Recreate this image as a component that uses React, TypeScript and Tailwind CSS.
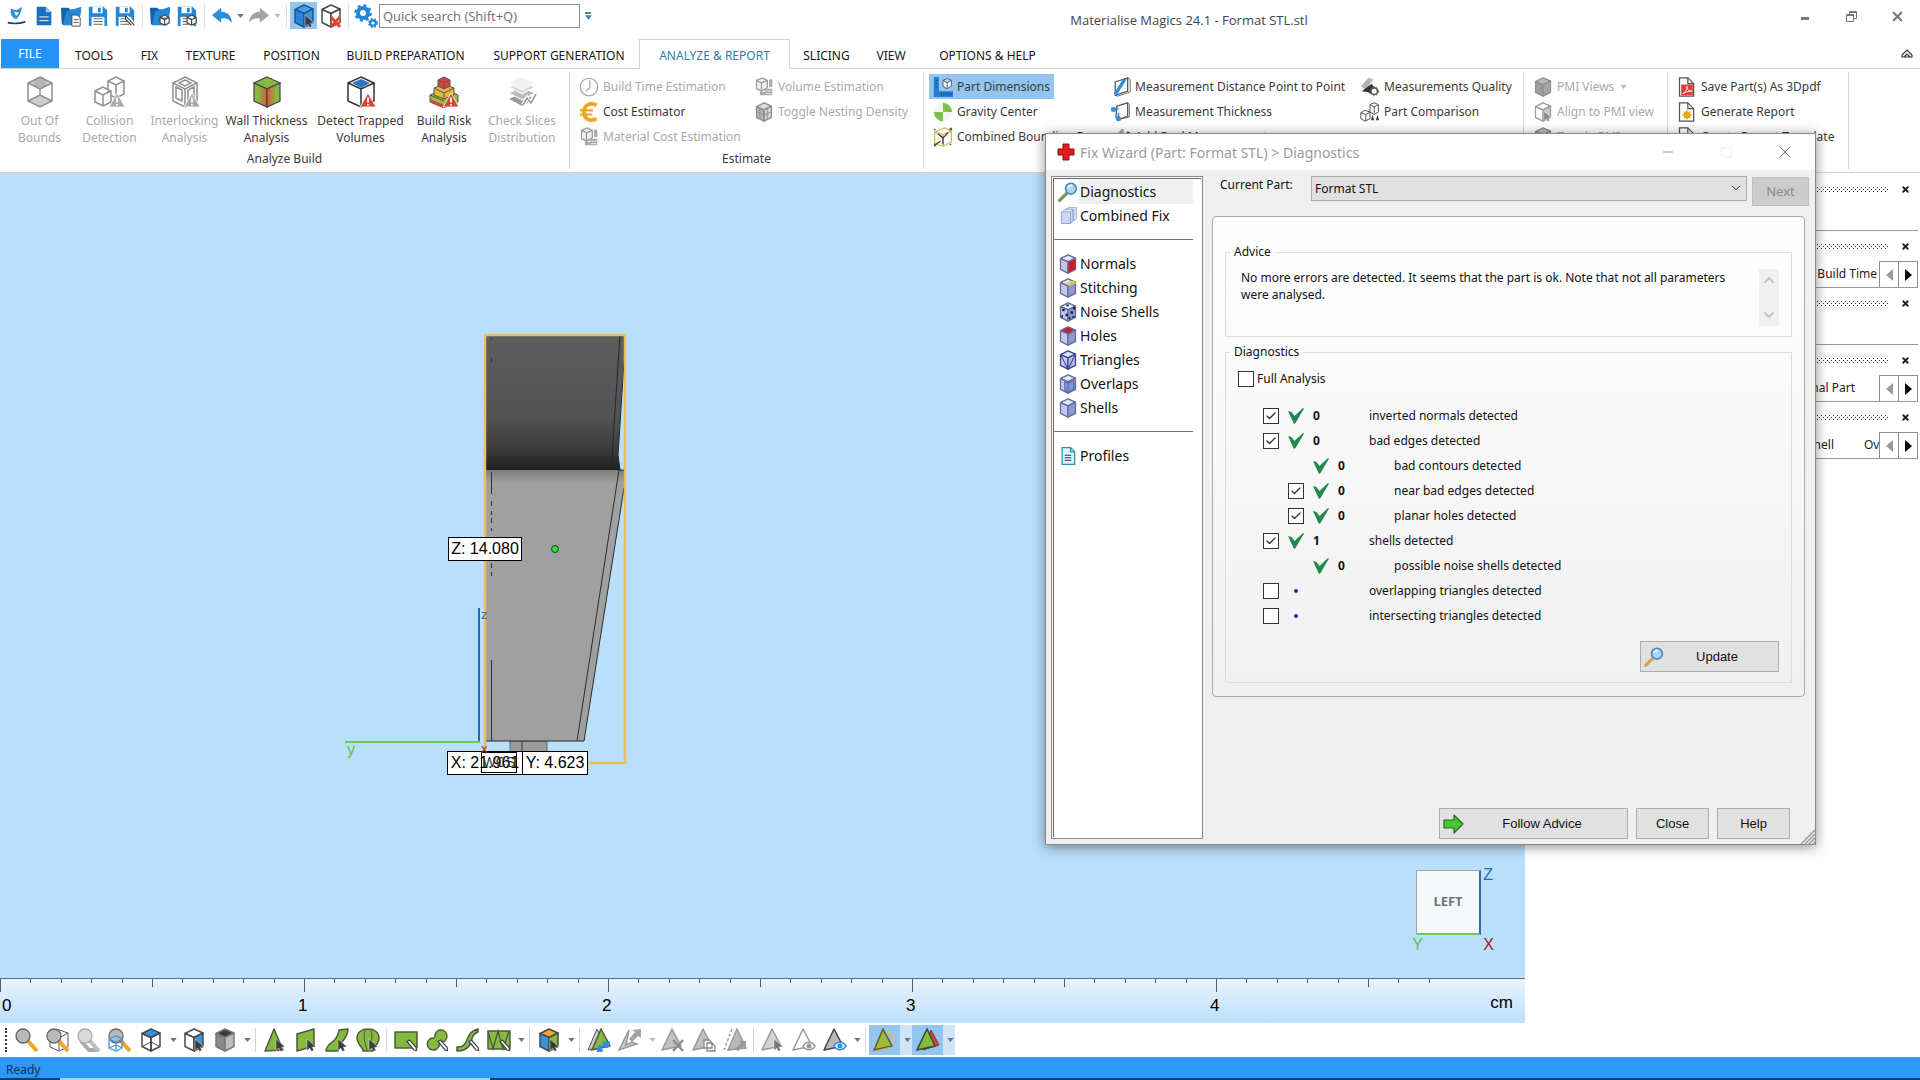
import React, { useState } from "react";
import { Check, ChevronDown, ChevronUp, Minus, Square, X } from "lucide-react";

type CubeProps = {
  top?: string;
  left?: string;
  right?: string;
  stroke?: string;
  children?: React.ReactNode;
  className?: string;
};

const Cube = ({
  top = "#fff",
  left = "#fff",
  right = "#fff",
  stroke = "#4a4a4a",
  children,
  className = "w-[24px] h-[24px]",
}: CubeProps) => (
  <svg viewBox="0 0 24 24" className={className}>
    <g stroke={stroke} strokeWidth="1.5" strokeLinejoin="round">
      <path d="M12 1 21 5 12 9.5 3 5.5Z" fill={top} />
      <path d="M3 5.5 12 9.5V23L3 18.5Z" fill={left} />
      <path d="M21 5 12 9.5V23L21 18.5Z" fill={right} />
    </g>
    {children}
  </svg>
);

const Cursor = ({ fill = "#3c3c3c" }) => (
  <path d="M13 11v11.500l2.800-2.300 1.700 3.300 2.400-1.200-1.700-3.100 3.800-.400Z" fill={fill} stroke="#fff" strokeWidth=".4" />
);

const Warning = ({ fill = "#d9453d" }) => (
  <g>
    <path d="M23 17 31 31H15Z" fill={fill} stroke="#fff" strokeWidth=".8" />
    <path d="M23 21.500v5M23 28v1.500" stroke="#fff" strokeWidth="1.800" />
  </g>
);

const Svg = ({
  children,
  className = "w-[24px] h-[24px]",
}: {
  children: React.ReactNode;
  className?: string;
}) => (
  <svg viewBox="0 0 24 24" className={className} fill="none">
    {children}
  </svg>
);

const Caret = ({ faded = false, wide = false }) => (
  <span
    className={
      wide
        ? "w-3 h-7 pl-[2px] flex items-center justify-center"
        : "w-[10px] flex items-center justify-center"
    }
  >
    <svg viewBox="0 0 8 5" className="w-[7px] h-[4px]">
      <path d="M0 0H8L4 5Z" fill={faded ? "#b9b9b9" : "#6b7680"} />
    </svg>
  </span>
);

/* ---------- quick access bar ---------- */

const Floppy = ({ children }: { children?: React.ReactNode }) => (
  <Svg className="w-[22px] h-[22px]">
    <path d="M2 2h16l4 4v17H2Z" fill="#2387d8" />
    <path d="M6 2h11v7H6Z" fill="#fff" />
    <path d="M12 3h3v5h-3Z" fill="#2387d8" />
    <path d="M5 13h14v10H5Z" fill="#fff" />
    <path d="M7 15h10M7 18h10M7 21h10" stroke="#555" strokeWidth="1" />
    {children}
  </Svg>
);

const Folder = ({ children }: { children?: React.ReactNode }) => (
  <Svg className="w-[22px] h-[22px]">
    <path d="M1 3h8l2 2h9v5L6 22 2 21Z" fill="#1463a8" />
    <path d="M7 7 23 2v5l-3 15H3Z" fill="#2387d8" />
    {children}
  </Svg>
);

const smallCube = (
  <path
    d="M17 11l5 2.500v6L17 22l-5-2.500v-6ZM12 13.500l5 2.500 5-2.500M17 16v6"
    fill="#fff"
    stroke="#444"
    strokeWidth="1.300"
  />
);

const Gear = () => (
  <Svg>
    <circle cx="9" cy="9" r="5" stroke="#2387d8" strokeWidth="4" />
    <circle cx="9" cy="9" r="7.600" stroke="#2387d8" strokeWidth="2.400" strokeDasharray="3 3" />
    <circle cx="19" cy="19" r="2.700" stroke="#2387d8" strokeWidth="2.300" />
    <circle cx="19" cy="19" r="4.200" stroke="#2387d8" strokeWidth="1.600" strokeDasharray="1.700 1.700" />
  </Svg>
);

const QuickSlot = ({
  label,
  active,
  children,
}: {
  label: string;
  active?: boolean;
  children: React.ReactNode;
}) => (
  <button
    aria-label={label}
    className={`w-[27px] h-[27px] flex items-center justify-center ${active ? "bg-[#93c5f0]" : ""}`}
  >
    {children}
  </button>
);

const QuickSep = () => (
  <span className="w-2 flex justify-center">
    <span className="w-px h-6 bg-[#dcdcdc]" />
  </span>
);

const TitleBar = () => (
  <header className="flex items-start h-[39px] pt-[2px] font-['Open_Sans','Noto_Sans',sans-serif]">
    <div className="flex items-center pl-[3px]">
      <QuickSlot label="Magics">
        <Svg className="w-[20px] h-[20px]">
          <path d="M5 3c5 3 8 2 13-2-1 7-3 11-7 15C6 14 3 9 5 3Z" fill="#2a95cf" />
          <path d="M9 6c2 2 4 2 5 1 0 2-1 3-3 5-1-2-2-3-2-6Z" fill="#fff" />
          <path d="M1 20c8 2 14 1 21-1" stroke="#14405e" strokeWidth="2" />
        </Svg>
      </QuickSlot>
      <QuickSlot label="New">
        <Svg className="w-[22px] h-[22px]">
          <path d="M4 2h10l6 6v14H4Z" fill="#1b6ec0" />
          <path d="M14 2v6h6Z" fill="#9cc8ee" />
          <path d="M7 13h10M7 17h10" stroke="#fff" strokeWidth="1" />
        </Svg>
      </QuickSlot>
      <QuickSlot label="Open">
        <Folder>
          <path d="M13 11h6l3 3v9h-9Z" fill="#fff" stroke="#444" />
          <path d="M15 16h5M15 19h5" stroke="#444" />
        </Folder>
      </QuickSlot>
      <QuickSlot label="Save">
        <Floppy />
      </QuickSlot>
      <QuickSlot label="Save as">
        <Floppy>
          <path d="M13 13 22 22" stroke="#fff" strokeWidth="5" />
          <path d="M13 12 22 22M12 15l7 7M13 12l-1 3" stroke="#444" strokeWidth="1.200" />
        </Floppy>
      </QuickSlot>
      <QuickSep />
      <QuickSlot label="Import part">
        <Folder>{smallCube}</Folder>
      </QuickSlot>
      <QuickSlot label="Save part">
        <Floppy>{smallCube}</Floppy>
      </QuickSlot>
      <QuickSep />
      <QuickSlot label="Undo">
        <Svg className="w-[20px] h-[20px]">
          <path d="M0 11 11 2v5c7 0 12 4 13 13-4-5-8-6-13-5v5Z" fill="#2a8fdd" />
        </Svg>
      </QuickSlot>
      <Caret />
      <QuickSlot label="Redo">
        <Svg className="w-[20px] h-[20px]">
          <path d="M24 11 13 2v5C6 7 1 11 0 20c4-5 8-6 13-5v5Z" fill="#a3a3a3" />
        </Svg>
      </QuickSlot>
      <Caret faded />
      <QuickSep />
      <QuickSlot label="Select part" active>
        <Cube top="#4aa0e6" left="#2b86d3" right="#3a94dd" stroke="#1b5a96">
          <Cursor />
        </Cube>
      </QuickSlot>
      <QuickSlot label="Unload part">
        <Cube>
          <path d="M12 13 21 23M21 13 12 23" stroke="#e2443c" strokeWidth="3" />
        </Cube>
      </QuickSlot>
      <QuickSep />
      <QuickSlot label="Settings">
        <Gear />
      </QuickSlot>
      <input
        type="text"
        aria-label="Quick search"
        placeholder="Quick search (Shift+Q)"
        className="w-[201px] h-6 border border-[#8c8c8c] px-[3px] text-[13px] placeholder:text-[#6d6d6d] outline-none"
      />
      <span className="w-4 flex flex-col items-center gap-px">
        <span className="w-[6px] h-[2px] bg-[#4c84b0]" />
        <svg viewBox="0 0 8 5" className="w-[7px] h-[5px]">
          <path d="M0 0H8L4 5Z" fill="#4c84b0" />
        </svg>
      </span>
    </div>
    <h1 className="flex-1 text-center text-[13px] leading-9 text-[#444]">
      Materialise Magics 24.1 - Format STL.stl
    </h1>
    <div className="flex text-[#777]">
      <button aria-label="Minimize" className="w-[46px] h-7 flex items-center justify-center">
        <span className="w-2 h-[3px] mt-1 bg-[#7c7c7c]" />
      </button>
      <button aria-label="Restore" className="w-[46px] h-7 flex items-center justify-center">
        <svg viewBox="0 0 11 11" className="w-[11px] h-[11px]" fill="none" stroke="#777">
          <path d="M3.500 3V.5h7v7H8M3 1.500h8" />
          <path d="M.5 3.500h7v7h-7ZM0 4.500h8" />
        </svg>
      </button>
      <button aria-label="Close" className="w-[46px] h-7 flex items-center justify-center">
        <X size={15} strokeWidth={3.4} />
      </button>
    </div>
  </header>
);

/* ---------- tabs ---------- */

const tabs = [
  { name: "TOOLS", width: "w-[70px]" },
  { name: "FIX", width: "w-[41px]" },
  { name: "TEXTURE", width: "w-[81px]" },
  { name: "POSITION", width: "w-[81px]" },
  { name: "BUILD PREPARATION", width: "w-[147px]" },
  { name: "SUPPORT GENERATION", width: "w-[160px]" },
  { name: "ANALYZE & REPORT", width: "w-[151px]", active: true },
  { name: "SLICING", width: "w-[73px]" },
  { name: "VIEW", width: "w-[56px]" },
  { name: "OPTIONS & HELP", width: "w-[137px]" },
];

const TabBar = () => (
  <nav className="flex h-[30px] pl-px text-[12px] border-b border-[#cfd4d8]">
    <button className="w-[58px] h-[29px] bg-[#2494fa] text-white">FILE</button>
    {tabs.map((tab) => (
      <button
        key={tab.name}
        className={`${tab.width} whitespace-nowrap h-[30px] pt-[3px] ${
          tab.active
            ? "border border-b-white border-[#cfd4d8] bg-white text-[#2b7fae]"
            : "text-[#151515]"
        }`}
      >
        {tab.name}
      </button>
    ))}
    <button aria-label="Collapse ribbon" className="ml-auto mr-[7px]">
      <svg viewBox="0 0 12 10" className="w-3 h-[10px]" fill="none" stroke="#333" strokeWidth="1.200">
        <path d="M1 6 6 1l5 5M3 8l3-3 3 3M1 6v2h10V6" />
      </svg>
    </button>
  </nav>
);

/* ---------- ribbon ---------- */

const Big = ({
  lines,
  width,
  disabled,
  children,
}: {
  lines: [string, string];
  width: string;
  disabled?: boolean;
  children: React.ReactNode;
}) => (
  <button
    disabled={disabled}
    className={`${width} flex flex-col items-center leading-[17px] whitespace-nowrap ${
      disabled ? "text-[#a9a9a9]" : "text-[#3a3a3a]"
    }`}
  >
    <svg viewBox="0 0 32 32" className="w-8 h-8 mb-1" fill="none">
      {children}
    </svg>
    <span>{lines[0]}</span>
    <span>{lines[1]}</span>
  </button>
);

const Small = ({
  label,
  icon,
  disabled,
  active,
  caret,
}: {
  label: string;
  icon: React.ReactNode;
  disabled?: boolean;
  active?: boolean;
  caret?: boolean;
}) => (
  <button
    disabled={disabled}
    className={`h-[25px] flex items-center gap-1 px-1 whitespace-nowrap ${
      disabled ? "text-[#a9a9a9]" : "text-[#3a3a3a]"
    } ${active ? "bg-[#93c5f0]" : ""}`}
  >
    {icon}
    {label}
    {caret && <Caret faded />}
  </button>
);

const Column = ({ width, children }: { width: string; children: React.ReactNode }) => (
  <div className={`${width} flex flex-col items-start`}>{children}</div>
);

const Group = ({
  width,
  label,
  children,
}: {
  width: string;
  label?: string;
  children: React.ReactNode;
}) => (
  <section className={`${width} my-[3px] flex flex-col border-r border-[#d5d5d5]`}>
    <div className="flex-1 flex">{children}</div>
    <h2 className="h-[18px] text-center leading-4 text-[#3a3a3a]">{label}</h2>
  </section>
);

const sm = "w-5 h-5 shrink-0";

const BoxStack = () => (
  <Svg className={sm}>
    <path d="M3 4 10 1l6 3v9l-7 4-6-3Z" fill="#eee" stroke="#999" strokeWidth="1.500" />
    <path d="M3 4l6 3 7-3M9 7v9" stroke="#999" strokeWidth="1.500" />
    <path d="M13 14h9v8H7v-4h6ZM18 3h4v9h-4" fill="#aaa" />
    <path d="M14 17h7M14 20h7" stroke="#eee" />
  </Svg>
);

const Page = ({ children }: { children?: React.ReactNode }) => (
  <Svg className={sm}>
    <path d="M3 1h10l7 7v15H3Z" fill="#fff" stroke="#555" strokeWidth="1.500" />
    <path d="M13 1v7h7" stroke="#555" strokeWidth="1.500" />
    {children}
  </Svg>
);

const Ribbon = () => (
  <div className="flex h-[104px] text-[12px] border-b border-[#cfd4d8]">
    <Group width="w-[570px]" label="Analyze Build">
      <div className="flex pl-[5px] pt-1">
        <Big lines={["Out Of", "Bounds"]} width="w-[69px]" disabled>
          <path d="M4 7 16 1l12 6-12 6ZM4 25l12-6 12 6-12 6Z" fill="#ccc" />
          <circle cx="16" cy="7" r="6" fill="#b5b5b5" />
          <path d="M16 1 28 7v18l-12 6L4 25V7ZM4 7l12 6 12-6M16 13v6M4 25l12-6 12 6" stroke="#8f8f8f" strokeWidth="1.500" />
        </Big>
        <Big lines={["Collision", "Detection"]} width="w-[71px]" disabled>
          <path d="M14 5 22 1l8 4v13l-8 4-8-4ZM14 5l8 4 8-4M22 9v12" fill="#fff" stroke="#8f8f8f" strokeWidth="1.500" />
          <path d="M1 15 9 11l8 4v11l-8 4-8-4ZM1 15l8 4 8-4M9 19v11" fill="#fff" stroke="#8f8f8f" strokeWidth="1.500" />
          <Warning fill="#a9a9a9" />
        </Big>
        <Big lines={["Interlocking", "Analysis"]} width="w-[79px]" disabled>
          <path d="M16 1 28 7v18l-12 6L4 25V7ZM4 7l12 6 12-6M16 13v18" stroke="#8f8f8f" strokeWidth="1.500" />
          <path d="M16 4 22 7l-6 3-6-3ZM7 11l6 3v11l-6-3ZM25 11l-6 3v11l6-3Z" stroke="#8f8f8f" strokeWidth="1.500" />
          <Warning fill="#a9a9a9" />
        </Big>
        <Big lines={["Wall Thickness", "Analysis"]} width="w-[85px]">
          <defs>
            <linearGradient id="wallL" x1="0" x2="1">
              <stop offset=".3" stopColor="#86b93f" />
              <stop offset="1" stopColor="#e2533c" />
            </linearGradient>
            <linearGradient id="wallR" x1="0" x2="1">
              <stop offset="0" stopColor="#e2533c" />
              <stop offset=".7" stopColor="#86b93f" />
            </linearGradient>
          </defs>
          <path d="M16 1 29 7l-13 6L3 7Z" fill="#86b93f" stroke="#444" strokeWidth="1.200" />
          <path d="M3 7l13 6v18L3 25Z" fill="url(#wallL)" stroke="#444" strokeWidth="1.200" />
          <path d="M29 7l-13 6v18l13-6Z" fill="url(#wallR)" stroke="#444" strokeWidth="1.200" />
        </Big>
        <Big lines={["Detect Trapped", "Volumes"]} width="w-[103px]">
          <path d="M16 1 29 7v18l-13 6L3 25V7Z" fill="#fff" stroke="#333" strokeWidth="1.500" />
          <path d="M7 7l9-4 9 4-9 5Z" fill="#2a77bd" />
          <path d="M3 7l13 6 13-6M16 13v18" stroke="#333" strokeWidth="1.500" />
          <Warning />
        </Big>
        <Big lines={["Build Risk", "Analysis"]} width="w-[64px]">
          <path d="M2 19 16 13l14 6v7l-14 6-14-6Z" fill="#9dbb3e" stroke="#555" />
          <path d="M2 23l14 6v3L2 26Z" fill="#d9453d" />
          <path d="M6 12 16 8l10 4v7l-10 4-10-4Z" fill="#e2b83b" stroke="#555" />
          <path d="M10 4l6-3 6 3v6l-6 3-6-3Z" fill="#d9453d" stroke="#555" />
          <path d="M10 4l6 3 6-3M16 7v6M6 12l10 5 10-5M16 17v6M2 19l14 6" stroke="#555" />
          <Warning />
        </Big>
        <Big lines={["Check Slices", "Distribution"]} width="w-[92px]" disabled>
          <path d="M3 23l13-6 13 6-13 7Z" fill="#9b9b9b" />
          <path d="M3 17l13-6 13 6-13 7Z" fill="#bcbcbc" stroke="#fff" />
          <path d="M3 11l13-6 13 6-13 7Z" fill="#d7d7d7" stroke="#fff" />
          <path d="M3 7l13-6 13 6-13 7Z" fill="#efefef" stroke="#fff" />
          <path d="M17 29l4-7 4 5 5-9" stroke="#fff" strokeWidth="4" />
          <path d="M17 29l4-7 4 5 5-9" stroke="#8f8f8f" strokeWidth="1.500" />
        </Big>
      </div>
    </Group>
    <Group width="w-[354px]" label="Estimate">
      <div className="flex pl-[5px] pt-[2px]">
        <Column width="w-[175px]">
          <Small
            label="Build Time Estimation"
            disabled
            icon={
              <Svg className={sm}>
                <circle cx="12" cy="12" r="10.500" stroke="#a9a9a9" strokeWidth="1.500" />
                <path d="M13 4v9l-5 4" stroke="#a9a9a9" strokeWidth="1.500" />
              </Svg>
            }
          />
          <Small
            label="Cost Estimator"
            icon={
              <Svg className={sm}>
                <path d="M21 4C14 0 6 3 6 12s8 12 15 8" stroke="#f0a51e" strokeWidth="4.500" />
                <path d="M1 10h16M1 15h15" stroke="#f0a51e" strokeWidth="2.500" />
              </Svg>
            }
          />
          <Small label="Material Cost Estimation" disabled icon={<BoxStack />} />
        </Column>
        <Column width="w-[170px]">
          <Small label="Volume Estimation" disabled icon={<BoxStack />} />
          <Small
            label="Toggle Nesting Density"
            disabled
            icon={
              <Cube top="#ddd" left="#b5b5b5" right="#cfcfcf" stroke="#8d8d8d" className={sm}>
                <path d="M12 10v12M7 8v12M16 8v12M4 12l8 4 8-4" stroke="#8d8d8d" fill="none" />
              </Cube>
            }
          />
        </Column>
      </div>
    </Group>
    <Group width="w-[600px]">
      <div className="flex pl-[5px] pt-[2px]">
        <Column width="w-[178px]">
          <Small
            label="Part Dimensions"
            active
            icon={
              <Svg className={sm}>
                <path d="M1 0h6v17h17v7H1Z" fill="#1f7fd0" />
                <path d="M10 19v3M13 19v3M16 19v3M19 19v3M22 19v3M3 4h3M3 8h3M3 12h3" stroke="#144e82" />
                <path d="M17 2l5 2v7l-5 3-5-3V4ZM12 4l5 3 5-3M17 7v6" fill="#fff" stroke="#444" />
              </Svg>
            }
          />
          <Small
            label="Gravity Center"
            icon={
              <Svg className={sm}>
                <path d="M12 12V1A11 11 0 0 0 1 12ZM12 12v11A11 11 0 0 0 23 12Z" fill="#f3f3f3" />
                <path d="M12 12V1A11 11 0 0 1 23 12ZM12 12v11A11 11 0 0 1 1 12Z" fill="#7cc04b" />
              </Svg>
            }
          />
          <Small
            label="Combined Bounding Box"
            icon={
              <Svg className={sm}>
                <path d="M2 6 14 1l8 4v13l-10 5-10-3ZM2 6l10 3 10-4M12 9v13" stroke="#d8a93a" strokeWidth="1.300" />
                <path d="M6 8l6 5 6-6M12 13v8M3 21l6-4" stroke="#333" strokeWidth="1.500" />
                <path d="M1 2h2v2H1ZM20 1h3v3h-3ZM1 20h3v3H1ZM20 20h2v2h-2Z" fill="#555" />
              </Svg>
            }
          />
        </Column>
        <Column width="w-[249px]">
          <Small
            label="Measurement Distance Point to Point"
            icon={
              <Svg className={sm}>
                <path d="M5 6 20 1v16L5 22Z" fill="#fff" stroke="#555" strokeWidth="1.500" />
                <path d="M20 1l3 2v15l-15 5-3-1" stroke="#555" />
                <path d="M17 2 5 21" stroke="#2f8fdf" strokeWidth="4" />
              </Svg>
            }
          />
          <Small
            label="Measurement Thickness"
            icon={
              <Svg className={sm}>
                <path d="M7 5 20 1v16L9 21l-3-3Z" fill="#fff" stroke="#555" strokeWidth="1.500" />
                <path d="M20 1l2 2v15L9 21" stroke="#555" />
                <path d="M0 8h9M9 21v-8" stroke="#2f8fdf" strokeWidth="2" />
                <circle cx="3" cy="9" r="3" fill="#2f8fdf" />
                <circle cx="9" cy="20" r="3" fill="#2f8fdf" />
              </Svg>
            }
          />
          <Small
            label="Add Real Measurement"
            icon={
              <Svg className={sm}>
                <path d="M1 15 13 2l3 1-3 9-9 7Z" fill="#aaa" />
                <path d="M10 18 20 5l3 2-8 14Z" fill="#444" />
              </Svg>
            }
          />
        </Column>
        <Column width="w-[164px]">
          <Small
            label="Measurements Quality"
            icon={
              <Svg className={sm}>
                <path d="M1 11 10 1l6 2-9 12Z" fill="#b5b5b5" />
                <path d="M2 17 14 8l4 6-5 6-4-2Z" fill="#333" />
                <circle cx="17" cy="17" r="4" fill="#fff" stroke="#555" strokeWidth="2" />
                <circle cx="17" cy="17" r="5.500" stroke="#555" strokeDasharray="2 2" />
              </Svg>
            }
          />
          <Small
            label="Part Comparison"
            icon={
              <Svg className={sm}>
                <path d="M12 3 17 1l5 2v9l-5 3-5-3ZM12 3l5 3 5-3M17 6v8" fill="#fff" stroke="#555" strokeWidth="1.200" />
                <path d="M1 13l5-3 6 2v8l-6 3-5-3ZM1 13l6 2 5-3M7 15v8" fill="#fff" stroke="#555" strokeWidth="1.200" />
                <path d="M15 15l-2 7h4ZM21 15l-2 7h4Z" fill="#444" />
              </Svg>
            }
          />
        </Column>
      </div>
    </Group>
    <Group width="w-[144px]">
      <div className="flex pl-[5px] pt-[2px]">
        <Column width="w-[130px]">
          <Small
            label="PMI Views"
            disabled
            caret
            icon={<Cube top="#b9b9b9" left="#9d9d9d" right="#a7a7a7" stroke="#8f8f8f" className={sm} />}
          />
          <Small
            label="Align to PMI view"
            disabled
            icon={
              <Cube stroke="#9a9a9a" right="#c9c9c9" className={sm}>
                <Cursor fill="#888" />
              </Cube>
            }
          />
          <Small
            label="Toggle PMI"
            disabled
            icon={<Cube top="#b9b9b9" left="#9d9d9d" right="#a7a7a7" stroke="#8f8f8f" className={sm} />}
          />
        </Column>
      </div>
    </Group>
    <Group width="w-[181px]">
      <div className="flex pl-[5px] pt-[2px]">
        <Column width="w-[170px]">
          <Small
            label="Save Part(s) As 3Dpdf"
            icon={
              <Page>
                <path d="M5 9h14v13H5Z" fill="#dd4038" />
                <path d="M7 20c4-2 5-5 5-9 0 5 2 6 6 6-5 0-8 1-11 3Z" stroke="#fff" />
              </Page>
            }
          />
          <Small
            label="Generate Report"
            icon={
              <Page>
                <path d="M12 9l1.500 3 3-1-1 3 3 1.500-3 1.500 1 3-3-1L12 22l-1.500-3-3 1 1-3-3-1.500 3-1.500-1-3 3 1Z" fill="#f0a51e" />
              </Page>
            }
          />
          <Small label="Create Report Template" icon={<Page />} />
        </Column>
      </div>
    </Group>
  </div>
);

/* ---------- viewport ---------- */

const Model = () => (
  <svg
    viewBox="340 320 300 450"
    className="absolute left-[340px] top-[147px] w-[300px] h-[450px]"
    fill="none"
  >
    <defs>
      <linearGradient id="upper" x1="0" y1="0" x2="0" y2="1">
        <stop offset="0" stopColor="#5d5d5d" />
        <stop offset=".6" stopColor="#535353" />
        <stop offset=".85" stopColor="#3b3b3b" />
        <stop offset="1" stopColor="#1e1e1e" />
      </linearGradient>
      <linearGradient id="lower" x1="0" y1="0" x2="0" y2="1">
        <stop offset="0" stopColor="#7d7d7d" />
        <stop offset=".05" stopColor="#a0a0a0" />
        <stop offset="1" stopColor="#9f9f9f" />
      </linearGradient>
    </defs>
    <path d="M486 336H625L619 440 618 455 620 470H486Z" fill="url(#upper)" />
    <path d="M620 336 613 440 612 463M625 345 619 440 618 455 620 470" stroke="#25252d" />
    <path d="M510 741H547V755H510Z" fill="#9b9b9b" stroke="#4b6a86" />
    <path d="M522 741V753" stroke="#333" />
    <path d="M486 470H624V490L584 741H486Z" fill="url(#lower)" />
    <path d="M619 470 577 741M624 488 584 741M486 741H584M619 470H625" stroke="#2d2d2d" />
    <path
      d="M491.500 338v2M491.500 358v4M491.500 472v22M491.500 501v5M491.500 511v4M491.500 518v5M491.500 528v3M491.500 563v5M491.500 572v4M491.500 660V741"
      stroke="#333"
    />
    <path d="M485 750V335H625V763H585" stroke="#e3c060" strokeWidth="2.500" />
    <path d="M479 608V742" stroke="#2667c2" strokeWidth="2" />
    <path d="M345 742H480" stroke="#67cc58" strokeWidth="2" />
    <circle cx="555" cy="549" r="3.500" fill="#32dc39" stroke="#1d3f1d" />
  </svg>
);

const axis = "absolute font-['Liberation_Sans',sans-serif]";
const dimension =
  "absolute h-6 border border-black flex items-center justify-center text-[16px] text-black font-['Liberation_Sans',sans-serif]";

const ticks = Array.from({ length: 48 }, (_, i) => i);
const PX_PER_CM = 304;

const Ruler = () => (
  <div className="relative h-[45px] border-t border-[#56708a] bg-linear-to-b from-[#e9f4fd] to-[#bcdffb] overflow-hidden font-['Liberation_Sans',sans-serif] text-[17px] leading-5 text-black">
    <svg className="w-full h-4" stroke="#4d5f70">
      {ticks.map((i) => {
        const x = Math.round((i * PX_PER_CM) / 10) + 0.5;
        return <path key={i} d={`M${x} 0V${i % 10 === 0 ? 13 : i % 5 === 0 ? 8 : 4}`} />;
      })}
    </svg>
    {[0, 1, 2, 3, 4].map((n) => (
      <span
        key={n}
        className="absolute top-[17px]"
        style={{ left: n === 0 ? 2 : n * PX_PER_CM - 6 }}
      >
        {n}
      </span>
    ))}
    <span className="absolute top-[14px] right-3 text-[17px]">cm</span>
  </div>
);

const Viewport = () => (
  <main className="flex-1 min-w-0 flex flex-col">
    <div className="relative flex-1 bg-[#badffa] overflow-hidden">
      <Model />
      <div className={`${dimension} left-[448px] top-[364px] w-[74px] bg-white`}>Z: 14.080</div>
      <div className={`${dimension} left-[447px] top-[578px] w-[76px] bg-white`}>X: 21.961</div>
      <div className={`${dimension} left-[522px] top-[578px] w-[66px] bg-white`}>Y: 4.623</div>
      <div className="absolute left-[481px] top-[579px] w-9 h-[21px] border border-black flex items-center justify-center text-[14px] text-[#333] font-['Liberation_Sans',sans-serif]">
        WCS
      </div>
      <span className={`${axis} left-[347px] top-[565px] text-[16px] text-[#5cbf50]`}>y</span>
      <span className={`${axis} left-[481px] top-[432px] text-[13px] text-[#3c6ea8]`}>z</span>
      <span className={`${axis} left-[481px] top-[566px] text-[13px] text-[#c01c28]`}>x</span>

      <div className="absolute right-[44px] bottom-[43px] w-[65px] h-[65px] bg-[#f6f8fa] border-t border-l border-[#9aa4ad] border-r-2 border-r-[#3068b8] border-b-2 border-b-[#6cc95c] flex items-center justify-center text-[13px] font-bold text-[#6f7378]">
        LEFT
      </div>
      <span className={`${axis} right-[32px] bottom-[91px] text-[16px] text-[#3068b8]`}>Z</span>
      <span className={`${axis} right-[102px] bottom-[21px] text-[16px] text-[#5cbf50]`}>Y</span>
      <span className={`${axis} right-[31px] bottom-[21px] text-[16px] text-[#b01030]`}>X</span>
    </div>
    <Ruler />
  </main>
);

/* ---------- docked pages on the right ---------- */

const docks = [
  { id: 1, tabs: [] },
  { id: 2, tabs: ["Build Time"] },
  { id: 3, tabs: [] },
  { id: 4, tabs: ["Original Part"] },
  { id: 5, tabs: ["Shell", "Overlaps"] },
];

const dockTabs: Record<number, string> = {
  2: "pr-[2px]",
  4: "pr-[24px]",
  5: "",
};

const Dock = ({ id, tabs }: { id: number; tabs: string[] }) => (
  <section className="h-[57px] flex flex-col border-b border-[#999]">
    <div className="h-[31px] flex items-center pr-[9px]">
      <svg className="flex-1 h-[5px] mr-3">
        <defs>
          <pattern id={`grip${id}`} width="4" height="4" patternUnits="userSpaceOnUse">
            <path d="M0 0h1v1H0ZM2 2h1v1H2Z" fill="#333" />
          </pattern>
        </defs>
        <rect width="100%" height="5" fill={`url(#grip${id})`} />
      </svg>
      <button aria-label="Close page" className="w-2">
        <X size={9} strokeWidth={5} />
      </button>
    </div>
    {tabs.length > 0 && (
      <div className="flex-1 flex">
        <div className={`flex-1 flex justify-end overflow-hidden text-[12px] leading-[26px] whitespace-nowrap ${dockTabs[id]}`}>
          {tabs.length === 1 ? (
            <button>{tabs[0]}</button>
          ) : (
            <>
              <button className="mr-[30px]">{tabs[0]}</button>
              <button className="w-[15px] overflow-hidden text-left">{tabs[1]}</button>
            </>
          )}
        </div>
        <button aria-label="Scroll left" className="w-5 border border-b-0 border-[#8d8d8d] flex items-center justify-center">
          <svg viewBox="0 0 7 12" className="w-[7px] h-3">
            <path d="M7 0V12L0 6Z" fill="#9a9a9a" />
          </svg>
        </button>
        <button aria-label="Scroll right" className="w-[19px] border-t border-r border-[#8d8d8d] flex items-center justify-center">
          <svg viewBox="0 0 7 12" className="w-[7px] h-3">
            <path d="M0 0V12L7 6Z" fill="#000" />
          </svg>
        </button>
      </div>
    )}
  </section>
);

/* ---------- bottom toolbar ---------- */

const Tool = ({
  label,
  active,
  children,
}: {
  label: string;
  active?: boolean;
  children: React.ReactNode;
}) => (
  <button
    aria-label={label}
    className={`w-[31px] h-[30px] flex items-center justify-center ${active ? "bg-[#93c5f0]" : ""}`}
  >
    {children}
  </button>
);

const Sep = () => (
  <span className="w-[7px] flex justify-center">
    <span className="w-px h-6 bg-[#d5d5d5]" />
  </span>
);

const Lens = ({ handle = "#f2a427", glass = "#b9b9b9", rim = "#666", children, front }: any) => (
  <Svg>
    {children}
    <path d="M13 13 22 23" stroke={handle} strokeWidth="4" />
    <circle cx="8" cy="8" r="7" fill={glass} stroke={rim} strokeWidth="1.300" />
    {front}
  </Svg>
);

const Tri = ({ fill = "#86b93f", stroke = "#4d5a3c", children }: any) => (
  <Svg>
    <path d="M11 1 20 18 1 22Z" fill={fill} stroke={stroke} strokeWidth="1.500" strokeLinejoin="round" />
    {children}
  </Svg>
);

const Pen = () => (
  <path d="M13 13.500 20 22l2.500.500-.300-3L15.500 12Z" fill="#fff" stroke="#444" strokeWidth="1.200" />
);

const Shape = ({ d, children }: { d: string; children?: React.ReactNode }) => (
  <Svg>
    <path d={d} fill="#86b93f" stroke="#4d5a3c" strokeWidth="1.500" strokeLinejoin="round" />
    {children}
  </Svg>
);

const BottomBar = () => (
  <div className="h-[34px] flex items-center bg-white">
    <span className="w-[11px] h-6 flex justify-center">
      <span className="border-l-2 border-dotted border-[#333]" />
    </span>
    <Tool label="Zoom">
      <Lens />
    </Tool>
    <Tool label="Zoom part">
      <Lens>
        <path d="M12 1.500 22 5v14l-9 4-9-4V9M22 5l-9 5v12" stroke="#555" />
      </Lens>
    </Tool>
    <Tool label="Zoom previous">
      <Lens handle="#bdbdbd" glass="#d9d9d9" rim="#aaa">
        <path d="M4 13 12 22h10" stroke="#aaa" strokeWidth="4" />
      </Lens>
    </Tool>
    <Tool label="Unzoom">
      <Lens
        front={
          <path d="M1 11l7-3 6 3v9l-6 3-7-3ZM1 11l7 3 6-3M8 14v9M1 20l7-3 6 3" stroke="#3f9ae3" strokeWidth="1.300" />
        }
      />
    </Tool>
    <Tool label="Views">
      <Cube top="#3a93dd" left="none" right="none">
        <path d="M3 18.500 12 14l9 4.500" stroke="#4a4a4a" fill="none" />
      </Cube>
    </Tool>
    <Caret wide />
    <Tool label="View on plane">
      <Cube right="#3a93dd">
        <Cursor />
      </Cube>
    </Tool>
    <Tool label="Shading">
      <Cube top="#3b3b3b" left="#8b8b8b" right="#bdbdbd" stroke="#777" />
    </Tool>
    <Caret wide />
    <Sep />
    <Tool label="Mark triangle">
      <Shape d="M11 1 20 22 2 23Z">
        <Cursor />
      </Shape>
    </Tool>
    <Tool label="Mark plane">
      <Shape d="M3 6 20 1v17L3 23Z">
        <Cursor />
      </Shape>
    </Tool>
    <Tool label="Mark surface">
      <Shape d="M14 2l9-1c-1 14-9 10-10 22H1c1-10 11-7 13-21Z">
        <Cursor />
      </Shape>
    </Tool>
    <Tool label="Mark shell">
      <Shape d="M7 23c1-3-6-6-6-13C1 4 6 1 12 1s11 3 11 9c0 7-7 10-6 13Z">
        <path d="M9 2c-2 6 0 14 2 20M15 2c2 6 0 14-2 20" stroke="#4d5a3c" />
        <Cursor />
      </Shape>
    </Tool>
    <Sep />
    <Tool label="Rectangle selection">
      <Shape d="M1 4H23V20H1Z">
        <Pen />
      </Shape>
    </Tool>
    <Tool label="Brush">
      <Shape d="M10 7a6 6 0 1 1 7 7c-3 0-2 2-3 4a6 6 0 1 1-6-8c2 0 2-1 2-3Z">
        <Pen />
      </Shape>
    </Tool>
    <Tool label="Mark path">
      <Shape d="M22 1v3c-8 3-5 9-9 14-3 4-7 5-12 5v-4c5 0 7-1 9-5 3-7 4-11 12-13Z">
        <Pen />
      </Shape>
    </Tool>
    <Tool label="Mark area">
      <Shape d="M1 3H23V21H1Z">
        <path d="M1 3l5 18 5-18 5 18 6-18" stroke="#4d5a3c" strokeWidth="1.300" />
        <Pen />
      </Shape>
    </Tool>
    <Caret wide />
    <Sep />
    <Tool label="Colour part">
      <Cube top="#f2a427" left="#3a93dd" right="#86b93f">
        <Cursor />
      </Cube>
    </Tool>
    <Caret wide />
    <Sep />
    <Tool label="Invert marked">
      <Svg>
        <path d="M10 1 18 18 1 22Z" fill="#ccc" stroke="#555" />
        <path d="M14 1 23 18 5 22Z" fill="#86b93f" stroke="#4d5a3c" strokeWidth="1.500" />
        <path d="M16 14h7l-2 2 2 2-3 2-2-2-2 1ZM12 17l3 1-1 2 2 3-6 1 1-3Z" fill="#2f8fdf" stroke="#2f8fdf" />
      </Svg>
    </Tool>
    <Tool label="Expand marked">
      <Svg>
        <path d="M11 2 1 22l18-6-5-2-6 3Z" fill="#c9c9c9" stroke="#999" strokeWidth="1.500" />
        <path d="M23 1v9l-3-2-6 6-3-3 6-7-3-2Z" fill="#a3a3a3" />
      </Svg>
    </Tool>
    <Caret wide faded />
    <Tool label="Delete marked">
      <Tri fill="#c1c1c1" stroke="#999">
        <path d="M12 12 22 23M22 12 12 23" stroke="#8d8d8d" strokeWidth="2.500" />
      </Tri>
    </Tool>
    <Tool label="Copy marked">
      <Tri fill="#c1c1c1" stroke="#999">
        <path d="M12 12h5l3 3v5h-8ZM15 15h5l3 3v5h-8Z" fill="#fff" stroke="#888" strokeWidth="1.300" />
      </Tri>
    </Tool>
    <Tool label="Separate marked">
      <Svg>
        <path d="M9 1 1 22" stroke="#999" strokeDasharray="3 2" strokeWidth="1.500" />
        <path d="M14 1 23 20 5 22Z" fill="#b9b9b9" stroke="#999" strokeWidth="1.500" />
        <path d="M12 21l6-6-2-2h7v7l-2-2-6 5Z" fill="#9a9a9a" />
      </Svg>
    </Tool>
    <Sep />
    <Tool label="Select marked">
      <Tri fill="#d2d2d2" stroke="#999">
        <Cursor fill="#777" />
      </Tri>
    </Tool>
    <Tool label="Hide marked">
      <Tri fill="#fff" stroke="#999">
        <path d="M11 18c3-5 9-5 12 0-3 5-9 5-12 0Z" fill="#fff" stroke="#999" strokeWidth="1.500" />
        <circle cx="17" cy="18" r="2.500" fill="#999" />
      </Tri>
    </Tool>
    <Tool label="Show marked">
      <Tri fill="#b9b9b9" stroke="#444">
        <path d="M11 18c3-5 9-5 12 0-3 5-9 5-12 0Z" fill="#fff" stroke="#2f8fdf" strokeWidth="1.500" />
        <circle cx="17" cy="18" r="2.500" fill="#2f8fdf" />
      </Tri>
    </Tool>
    <Caret wide />
    <Sep />
    <Tool label="Triangle view" active>
      <Svg>
        <path d="M14 2 23 14" stroke="#cbb98a" strokeWidth="2.500" />
        <path d="M10 1 19 18 1 22Z" fill="#9fb93a" stroke="#5f5a2c" strokeWidth="1.500" />
        <path d="M2 23 19 19" stroke="#e5a33a" />
      </Svg>
    </Tool>
    <span className="h-[30px] flex items-center bg-[#cfe5f8]">
      <Caret wide />
    </span>
    <Tool label="Back faces" active>
      <Svg>
        <path d="M15 2 23 17 7 22Z" fill="#dd4038" stroke="#803028" />
        <path d="M11 1 19 18 1 22Z" fill="#86b93f" stroke="#3c4a2c" strokeWidth="1.500" />
      </Svg>
    </Tool>
    <span className="h-[30px] flex items-center bg-[#cfe5f8]">
      <Caret wide />
    </span>
  </div>
);

/* ---------- fix wizard ---------- */

const MagnifierIcon = ({ handle = "#8b8f6a" }) => (
  <Svg className="w-5 h-5">
    <path d="M2 22 11 13" stroke={handle} strokeWidth="4" strokeLinecap="round" />
    <circle cx="15.500" cy="8" r="6.500" fill="#a9d6f5" stroke="#4f86b5" strokeWidth="2" />
    <path d="M12 7c1-3 3-3 5-3" stroke="#fff" strokeWidth="1.500" />
  </Svg>
);

const lilac = { top: "#e3e6f6", left: "#c3c8ea", right: "#8d96d2", stroke: "#636a9c", className: "w-5 h-5" };

const wizardPages = [
  { name: "Diagnostics", icon: <MagnifierIcon /> },
  {
    name: "Combined Fix",
    icon: (
      <Svg className="w-5 h-5">
        <path d="M9 4 13 2h9v13l-3 3M6 6l3-2h10v14" fill="#e8eefa" stroke="#7f9bc9" />
        <path d="M4 7h11l3-2v13l-3 3H4Z" fill="#c9d8f3" stroke="#7f9bc9" />
        <path d="M15 8v13" stroke="#7f9bc9" />
      </Svg>
    ),
  },
  null,
  {
    name: "Normals",
    icon: (
      <Cube {...lilac}>
        <path d="M12.500 10 21 6V18l-8.500 4.500Z" fill="#c71f25" />
      </Cube>
    ),
  },
  {
    name: "Stitching",
    icon: (
      <Cube {...lilac}>
        <path d="M11 6l9-2M12 9l9-3.500" stroke="#e0cc3a" strokeWidth="2" />
      </Cube>
    ),
  },
  {
    name: "Noise Shells",
    icon: (
      <Cube {...lilac}>
        <path d="M5 8h3v3H5ZM9 14h3v3H9ZM4 16h2v3H4ZM10 3h3v2h-3ZM15 11h3v3h-3ZM18 6h3v3h-3ZM17 17h3v2h-3ZM13 18h2v3h-2Z" fill="#1d2440" />
      </Cube>
    ),
  },
  { name: "Holes", icon: <Cube {...lilac} top="#c71f25" /> },
  {
    name: "Triangles",
    icon: (
      <Cube top="#dfe0fb" left="#c9cbf5" right="#b7baf0" stroke="#3c4290" className="w-5 h-5">
        <path d="M3 5.500 12 23 21 5" stroke="#3c4290" fill="none" strokeWidth="1.300" />
      </Cube>
    ),
  },
  {
    name: "Overlaps",
    icon: (
      <Cube {...lilac}>
        <path d="M8 9l4 2 7-3v10l-7 4-4-2Z" fill="#7f93d8" stroke="#4a5faa" />
        <path d="M12 11v11" stroke="#4a5faa" />
      </Cube>
    ),
  },
  { name: "Shells", icon: <Cube {...lilac} /> },
  null,
  {
    name: "Profiles",
    icon: (
      <Svg className="w-5 h-5">
        <path d="M5 2h10l5 5v15H5Z" fill="#dff3fb" stroke="#2b8fb5" strokeWidth="1.500" />
        <path d="M15 2v5h5" stroke="#2b8fb5" strokeWidth="1.500" />
        <path d="M8 11h8M8 14h8M8 17h8" stroke="#1c3f55" strokeWidth="1.300" />
      </Svg>
    ),
  },
];

type Row = { label: string; count?: string; checked?: boolean; sub?: boolean };

const initialRows: Row[] = [
  { label: "inverted normals detected", count: "0", checked: true },
  { label: "bad edges detected", count: "0", checked: true },
  { label: "bad contours detected", count: "0", sub: true },
  { label: "near bad edges detected", count: "0", checked: true, sub: true },
  { label: "planar holes detected", count: "0", checked: true, sub: true },
  { label: "shells detected", count: "1", checked: true },
  { label: "possible noise shells detected", count: "0", sub: true },
  { label: "overlapping triangles detected", checked: false },
  { label: "intersecting triangles detected", checked: false },
];

const CheckBox = ({
  id,
  checked,
  onChange,
}: {
  id: string;
  checked: boolean;
  onChange: () => void;
}) => (
  <span className="relative w-4 h-4">
    <input
      type="checkbox"
      id={id}
      checked={checked}
      onChange={onChange}
      className="block w-4 h-4 appearance-none bg-white border border-[#333]"
    />
    {checked && (
      <Check size={12} strokeWidth={2.5} color="#333" className="absolute left-[2px] top-[2px] pointer-events-none" />
    )}
  </span>
);

const winButton =
  "h-[31px] border border-[#adadad] bg-[#e1e1e1] font-['Liberation_Sans',sans-serif] text-[13px] text-[#111]";

const FixWizard = () => {
  const [rows, setRows] = useState(initialRows);
  const [full, setFull] = useState(false);

  const toggle = (index: number) => {
    setRows((prev) => prev.map((row, i) => (i === index ? { ...row, checked: !row.checked } : row)));
  };

  return (
    <div
      role="dialog"
      aria-label="Fix Wizard"
      className="absolute right-[104px] top-[133px] w-[771px] border border-[#8a8a8a] bg-[#f0f0f0] shadow-[0_2px_12px_rgba(0,0,0,0.45)] text-[12px] text-[#111]"
    >
      <div className="h-9 flex items-center bg-white pl-[11px]">
        <svg viewBox="0 0 18 18" className="w-[18px] h-[18px]">
          <path d="M6 1h6v5h5v6h-5v5H6v-5H1V6h5Z" fill="#e8171b" stroke="#7d1410" />
        </svg>
        <h2 className="flex-1 pl-[5px] text-[14px] text-[#9b9b9b]">
          Fix Wizard (Part: Format STL) &gt; Diagnostics
        </h2>
        <button aria-label="Minimize wizard" className="w-[58px] flex justify-center">
          <Minus size={16} strokeWidth={1} color="#666" />
        </button>
        <button aria-label="Maximize wizard" disabled className="w-[58px] flex justify-center">
          <Square size={13} strokeWidth={1} color="#ddd" />
        </button>
        <button aria-label="Close wizard" className="w-[60px] flex justify-center">
          <X size={20} strokeWidth={1} color="#666" />
        </button>
      </div>

      <div className="flex pl-[5px] pr-[6px] pt-[6px] pb-[5px]">
        <div className="w-[152px] shrink-0 border border-[#8a8a8a] bg-white p-px">
          <nav className="h-full border-t border-l border-[#666] pt-px pr-2 text-[14px]">
            {wizardPages.map((page, i) =>
              page ? (
                <button key={i} className="w-full h-6 flex items-center gap-px pl-1">
                  {page.icon}
                  <span
                    className={`flex-1 h-full pl-px text-left leading-6 ${i === 0 ? "bg-[#f0f0f0]" : ""}`}
                  >
                    {page.name}
                  </span>
                </button>
              ) : (
                <div key={i} className="h-6 pt-[11px]">
                  <div className="h-px bg-[#777]" />
                </div>
              )
            )}
          </nav>
        </div>

        <div className="flex-1 ml-[9px]">
          <div className="h-10 flex items-start">
            <label htmlFor="currentPart" className="w-[99px] pl-2 leading-[17px]">
              Current Part:
            </label>
            <div className="relative flex-1">
              <select
                id="currentPart"
                className="block w-full h-[25px] pt-px px-[3px] appearance-none border border-[#acacac] bg-[#e1e1e1]"
              >
                <option>Format STL</option>
              </select>
              <ChevronDown size={14} strokeWidth={1.5} className="absolute right-1 top-[5px] pointer-events-none" />
            </div>
            <button disabled className="w-[57px] h-[29px] mt-px ml-[5px] border border-[#bfbfbf] bg-[#ccc] text-[13px] text-[#8a8a8a]">
              Next
            </button>
          </div>

          <div className="mr-1 px-3 pt-[26px] pb-[13px] rounded-[4px] border border-[#a9a9a9] bg-linear-to-b from-white to-[#f0f0f0]">
            <fieldset className="border border-[#dcdcdc]">
              <legend className="ml-1 px-1 leading-[18px]">Advice</legend>
              <div className="flex pl-[15px] pr-3 pt-2 pb-[10px]">
                <p className="flex-1 pr-4 leading-[17px]">
                  No more errors are detected. It seems that the part is ok. Note that not all parameters were analysed.
                </p>
                <div className="w-5 h-[57px] flex flex-col items-center justify-between py-[3px] bg-[#f0f0f0]">
                  <ChevronUp size={16} strokeWidth={3} color="#c4c4c4" />
                  <ChevronDown size={16} strokeWidth={3} color="#c4c4c4" />
                </div>
              </div>
            </fieldset>

            <fieldset className="mt-[6px] border border-[#dcdcdc]">
              <legend className="ml-1 px-1 leading-[18px]">Diagnostics</legend>
              <div className="flex items-center gap-[3px] pl-3 pt-[9px]">
                <CheckBox id="fullAnalysis" checked={full} onChange={() => setFull(!full)} />
                <label htmlFor="fullAnalysis">Full Analysis</label>
              </div>
              <div className="pl-[37px] pt-[15px]">
                {rows.map((row, i) => (
                  <div
                    key={row.label}
                    className={`h-[25px] grid grid-cols-[25px_25px_56px_auto] items-center ${row.sub ? "pl-[25px]" : ""}`}
                  >
                    {row.checked === undefined ? (
                      <span />
                    ) : (
                      <CheckBox id={`check${i}`} checked={row.checked} onChange={() => toggle(i)} />
                    )}
                    {row.count ? (
                      <svg viewBox="0 0 16 16" className="w-4 h-4">
                        <path d="M0 3l3.500 1L6.500 8 15 0l1 .5L7.500 15 6 16Z" fill="#1f8a4c" />
                      </svg>
                    ) : (
                      <span className="w-[4px] h-[4px] ml-[6px] rounded-full bg-[#2a2ab0]" />
                    )}
                    <b>{row.count}</b>
                    {row.checked === undefined ? (
                      <span>{row.label}</span>
                    ) : (
                      <label htmlFor={`check${i}`}>{row.label}</label>
                    )}
                  </div>
                ))}
              </div>
              <div className="flex justify-end pr-3 pt-[13px] pb-[10px]">
                <button className={`${winButton} w-[139px] flex items-center pl-[3px] pr-2`}>
                  <MagnifierIcon handle="#d3a750" />
                  <span className="flex-1">Update</span>
                </button>
              </div>
            </fieldset>
          </div>

          <div className="flex justify-end gap-2 pr-[19px] pt-[111px]">
            <button className={`${winButton} w-[189px] flex items-center pl-[3px] pr-2`}>
              <svg viewBox="0 0 22 20" className="w-[22px] h-5">
                <path d="M1 6h10V1l9 9-9 9v-5H1Z" fill="#4cc437" stroke="#1d6b18" strokeWidth="1.200" strokeLinejoin="round" />
              </svg>
              <span className="flex-1">Follow Advice</span>
            </button>
            <button className={`${winButton} w-[73px]`}>Close</button>
            <button className={`${winButton} w-[73px]`}>Help</button>
          </div>
        </div>
      </div>
      <svg viewBox="0 0 14 14" className="absolute right-0 bottom-0 w-[14px] h-[14px]" stroke="#999" strokeWidth="1.500">
        <path d="M0 14 14 0M4 14 14 4M8 14 14 8M12 14l2-2" />
      </svg>
    </div>
  );
};

const App = () => {
  return (
    <div className="relative min-h-screen flex flex-col overflow-hidden bg-white font-['Noto_Sans','Open_Sans',sans-serif] text-[#222]">
      <TitleBar />
      <TabBar />
      <Ribbon />
      <div className="flex-1 flex">
        <Viewport />
        <aside className="w-[395px] pt-px pr-[2px] bg-white">
          {docks.map((dock) => (
            <Dock key={dock.id} id={dock.id} tabs={dock.tabs} />
          ))}
        </aside>
      </div>
      <BottomBar />
      <footer className="h-[21px] px-[6px] bg-[#2d97fb] border-t border-[#5b93c4] text-[12px] leading-6 text-[#0f2f55]">
        Ready
      </footer>
      <div className="h-[2px] flex">
        <span className="w-[60px] bg-[#0b3f73]" />
        <span className="w-[430px] bg-[#9fd2f8]" />
        <span className="flex-1 bg-[#0b3f73]" />
      </div>
      <FixWizard />
    </div>
  );
};

export default App;
